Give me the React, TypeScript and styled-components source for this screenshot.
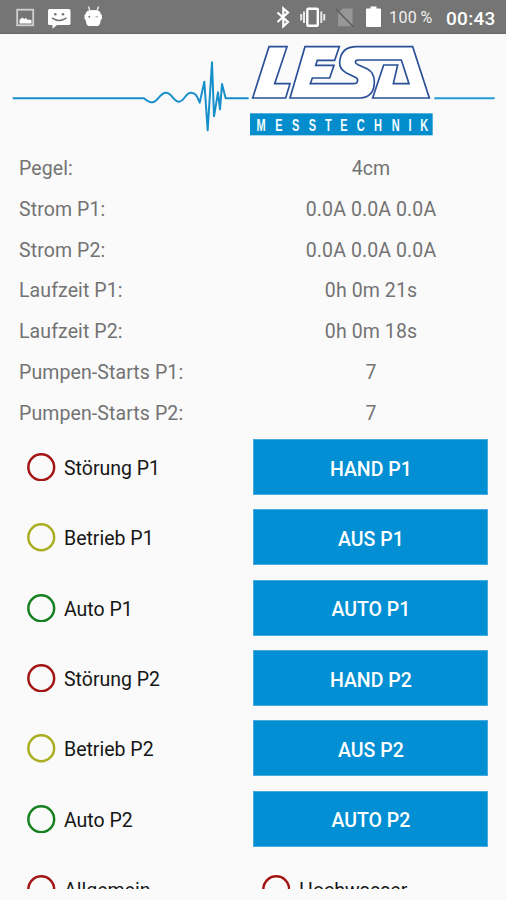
import React from "react";
import styled, { createGlobalStyle } from "styled-components";

const GlobalStyle = createGlobalStyle`
  * { box-sizing: border-box; }
  body { margin: 0; background: #fafafa; }
`;

const Screen = styled.main`
  display: flex;
  flex-direction: column;
  width: 506px;
  height: 900px;
  overflow: hidden;
  background: #fafafa;
  font-family: Roboto, sans-serif;
`;

const StatusBar = styled.header`
  display: flex;
  justify-content: space-between;
  height: 34px;
  flex: none;
  background: #757575;
  border-bottom: 1px solid #686868;
  color: #fff;
`;

const StatusIcons = styled.svg`
  display: block;
  height: 34px;
`;

const StatusGroup = styled.div`
  display: flex;
`;

const BatteryLevel = styled.span`
  width: 57px;
  padding-left: 1px;
  font-size: 16px;
  letter-spacing: 0.4px;
  word-spacing: -1px;
  line-height: 36px;
  white-space: nowrap;
  color: #f0f0f0;
`;

const Clock = styled.span`
  width: 61px;
  padding-left: 1px;
  font-size: 19px;
  font-weight: 500;
  line-height: 37px;
  letter-spacing: 0.3px;
`;

const Banner = styled.svg`
  display: block;
  flex: none;
  width: 506px;
  height: 114px;
`;

const Readings = styled.dl`
  flex: none;
  height: 284px;
  margin: 0;
  padding: 0 18px 0 19px;
`;

const Reading = styled.div`
  display: grid;
  grid-template-columns: 234px 235px;
  height: 40.75px;
  line-height: 42px;
  font-size: 19.5px;
  color: #737373;
`;

const ReadingLabel = styled.dt`
  letter-spacing: 0.1px;
`;

const ReadingValue = styled.dd`
  margin: 0;
  padding-left: 1px;
  text-align: center;
  letter-spacing: 0.1px;
`;

const Controls = styled.section`
  flex: none;
  height: 457px;
  overflow: hidden;
`;

const ControlRow = styled.div`
  display: grid;
  grid-template-columns: 226.4px 235px;
  align-items: center;
  height: 70.33px;
  padding-left: 27px;
`;

const Status = styled.div<{ $indent?: number }>`
  display: flex;
  align-items: center;
  gap: 8.5px;
  padding-left: ${(p) => p.$indent ?? 0}px;
  font-size: 19.5px;
  line-height: 30px;
  color: #161616;
`;

const Lamp = styled.svg`
  display: block;
  width: 28.5px;
  height: 28.5px;
`;

const LampLabel = styled.span`
  padding-top: 3.4px;
`;

const ActionButton = styled.button`
  width: 235px;
  height: 56px;
  margin: 0;
  padding: 4px 0 0;
  border: 1px solid #48aadd;
  background: #028fd3;
  color: #fff;
  font: 500 19.5px Roboto, sans-serif;
`;

const RED = "#a31515";
const YELLOW = "#a9ad20";
const GREEN = "#158020";

const readings = [
  ["Pegel:", "4cm"],
  ["Strom P1:", "0.0A 0.0A 0.0A"],
  ["Strom P2:", "0.0A 0.0A 0.0A"],
  ["Laufzeit P1:", "0h 0m 21s"],
  ["Laufzeit P2:", "0h 0m 18s"],
  ["Pumpen-Starts P1:", "7"],
  ["Pumpen-Starts P2:", "7"],
];

const controls = [
  { label: "Störung P1", color: RED, action: "HAND P1" },
  { label: "Betrieb P1", color: YELLOW, action: "AUS P1" },
  { label: "Auto P1", color: GREEN, action: "AUTO P1" },
  { label: "Störung P2", color: RED, action: "HAND P2" },
  { label: "Betrieb P2", color: YELLOW, action: "AUS P2" },
  { label: "Auto P2", color: GREEN, action: "AUTO P2" },
];

const StatusLamp = ({ label, color, indent }: { label: string; color: string; indent?: number }) => (
  <Status $indent={indent}>
    <Lamp viewBox="0 0 28.5 28.5">
      <circle cx="14.25" cy="14.25" r="12.9" fill="none" stroke={color} strokeWidth="2.5" />
    </Lamp>
    <LampLabel>{label}</LampLabel>
  </Status>
);

const NotificationIcons = () => (
  <StatusIcons width="110" viewBox="0 0 110 34">
    <rect x="17.2" y="9.7" width="16" height="15.6" fill="none" stroke="#d0d0d0" strokeWidth="1.8" />
    <path d="M19.5 23.5v-3.5l2.6-2.6 2.2 1.6 1.6-1 2 2 2-.6 1.6 1v3.1z" fill="#fff" />
    <path d="M49.5 9h19.5q1.5 0 1.5 1.5v13q0 1.5-1.5 1.5H57l-4.5 3.8V25h-3q-1.5 0-1.5-1.5v-13Q48 9 49.5 9z" fill="#fff" />
    <circle cx="55.3" cy="14.3" r="1.3" fill="#757575" />
    <circle cx="63" cy="14.3" r="1.3" fill="#757575" />
    <path d="M52 17.8q7.2 5.2 14.5 0" fill="none" stroke="#757575" strokeWidth="1.5" />
    <path d="M88.500 6.500l1.400 4.500M98.500 6.500l-1.400 4.500" stroke="#e4e4e4" strokeWidth="1.5" />
    <path d="M87.500 11q6-2.200 11.500 0 1.700 1 1.700 3l1.200 1v4l-1.200 1q-.5 6-3.500 6h-8q-3 0-3.500-6l-1.200-1v-4l1.200-1q0-2 1.800-3z" fill="#fff" />
    <circle cx="89.3" cy="16.8" r="1" fill="#757575" />
    <path d="M95.500 16.800h2.500" stroke="#999" strokeWidth="1" />
  </StatusIcons>
);

const SystemIcons = () => (
  <StatusIcons width="112" viewBox="0 0 112 34">
    <path d="M1.500 12.500l10.500 9.500-4.700 4.200V8.500L12 12.500 1.500 22" fill="none" stroke="#fff" strokeWidth="2.200" />
    <rect x="31.300" y="8.700" width="10.500" height="17" rx="1" fill="none" stroke="#fff" strokeWidth="2.400" />
    <path d="M28 11.500v11.500M25.200 14v6.500M45.300 11.500v11.500M48.200 14v6.500" stroke="#e8e8e8" strokeWidth="2" />
    <path d="M62 13l5-4.500H76.500v17.700H62z" fill="#979797" />
    <path d="M60 9l17.500 18" stroke="#606060" strokeWidth="1.600" />
    <path d="M91 8.500h3.500V6.500h6v2h3.500q1 0 1 1v16.500q0 1-1 1h-13q-1 0-1-1V9.500q0-1 1-1z" fill="#fff" />
  </StatusIcons>
);

const LETTER_CENTERS = [75, 129, 179, 229, 277, 324, 374, 426, 479, 522, 565];
const LETTER_SQUEEZE = 0.66;

const LesaBanner = () => (
  <Banner viewBox="0 0 506 114" aria-label="LESA Messtechnik">
    <g transform="translate(0 2) scale(.33333)" fill="none" stroke="#168fca" strokeWidth="6" strokeLinejoin="round">
      <path d="M38 186.500H432C442 195 449 199 457 199C474 199 479 170 498 170C516 170 520 197 537 197C553 197 556 170 573 170C588 170 591 181 599 200L613 137L623 283L636 79L642 241L654 169L660 220L666 144L677 186.500H746" />
    </g>
    <g transform="translate(236 2) scale(.33333)">
      <path d="M595 186.500H776" stroke="#209bd3" strokeWidth="6" />
      <g fill="#fff" stroke="#2a5098" strokeWidth="5" strokeLinejoin="miter">
        <path d="M99 32H153L116 143H162L149 186H50Z" />
        <path
          fillRule="evenodd"
          d="M207 32H310L296 73H244L239 88H294L281 126H229L223 143H352Q365 143 365 132Q365 127 356 123L330 110Q310 99 311 79Q314 32 362 32H530L580 186H410L443 87H485L472 143H519L496 72H367Q358 72 358 79Q358 82 366 86L393 98Q415 109 415 137Q415 183 372 186H162Z"
        />
      </g>
      <rect x="42" y="232" width="548" height="66" fill="#048dcc" />
      <text
        y="284"
        transform={`scale(${LETTER_SQUEEZE} 1)`}
        textAnchor="middle"
        fill="#f4fbff"
        fontFamily="Liberation Sans, sans-serif"
        fontSize="50"
        fontWeight="700"
      >
        {"MESSTECHNIK".split("").map((letter, i) => (
          <tspan key={i} x={LETTER_CENTERS[i] / LETTER_SQUEEZE}>
            {letter}
          </tspan>
        ))}
      </text>
    </g>
  </Banner>
);

export default function App() {
  return (
    <>
      <GlobalStyle />
      <Screen>
        <StatusBar>
          <NotificationIcons />
          <StatusGroup>
            <SystemIcons />
            <BatteryLevel>100 %</BatteryLevel>
            <Clock>00:43</Clock>
          </StatusGroup>
        </StatusBar>
        <LesaBanner />
        <Readings>
          {readings.map(([label, value]) => (
            <Reading key={label}>
              <ReadingLabel>{label}</ReadingLabel>
              <ReadingValue>{value}</ReadingValue>
            </Reading>
          ))}
        </Readings>
        <Controls>
          {controls.map((c) => (
            <ControlRow key={c.label}>
              <StatusLamp label={c.label} color={c.color} />
              <ActionButton>{c.action}</ActionButton>
            </ControlRow>
          ))}
          <ControlRow>
            <StatusLamp label="Allgemein" color={RED} />
            <StatusLamp label="Hochwasser" color={RED} indent={8.6} />
          </ControlRow>
        </Controls>
      </Screen>
    </>
  );
}
